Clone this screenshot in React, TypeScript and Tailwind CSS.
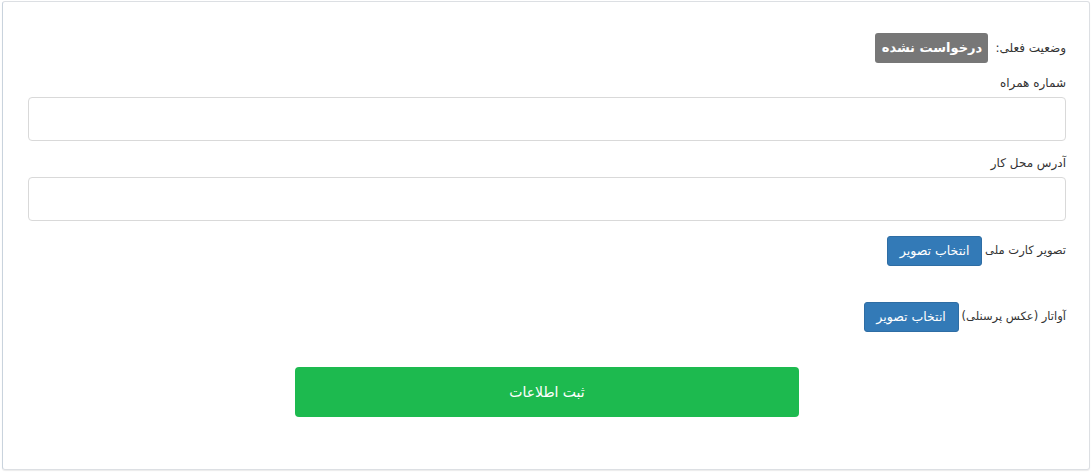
export default function App() {
  return (
    <div className="w-[1091px] h-[472px] bg-white pt-px pl-[2px]">
      <div
        dir="rtl"
        className="w-[1088px] h-[469px] border border-[#dcdfe3] border-l-[#c9d3dd] rounded-[3px] shadow-[0_1px_1px_rgba(0,0,0,0.08)] pl-[25px] pr-[23px] pt-[31px] text-[12px] text-[#333]"
        style={{ fontFamily: '"DejaVu Sans", "Noto Sans", sans-serif' }}
      >
        {/* Current status */}
        <div className="flex items-center gap-[7px] h-[30px]">
          <span>وضعیت فعلی:</span>
          <span className="h-[30px] w-[113px] flex items-center justify-center rounded-[3px] bg-[#777] text-white font-bold text-[13px]">
            درخواست نشده
          </span>
        </div>

        <div className="mt-[11px] h-[18px] leading-[18px]">شماره همراه</div>
        <input
          type="text"
          className="mt-[5px] block w-full h-[44px] border border-[#d9d9d9] rounded-[4px] outline-none"
        />

        <div className="mt-[13px] h-[18px] leading-[18px]">آدرس محل کار</div>
        <input
          type="text"
          className="mt-[5px] block w-full h-[44px] border border-[#d9d9d9] rounded-[4px] outline-none"
        />

        <div className="mt-[15px] flex items-center gap-[3px] h-[30px]">
          <span className="text-[11.5px]">تصویر کارت ملی</span>
          <button className="h-[30px] w-[95px] rounded-[3px] bg-[#337ab7] border border-[#2e6da4] text-white text-[12.5px]">
            انتخاب تصویر
          </button>
        </div>

        <div className="mt-[36px] flex items-center gap-[3px] h-[30px]">
          <span className="text-[11.5px]">آواتار (عکس پرسنلی)</span>
          <button className="h-[30px] w-[95px] rounded-[3px] bg-[#337ab7] border border-[#2e6da4] text-white text-[12.5px]">
            انتخاب تصویر
          </button>
        </div>

        <div className="mt-[35px] flex justify-center">
          <button className="h-[50px] w-[504px] rounded-[4px] bg-[#1dba4f] text-white text-[14px]">
            ثبت اطلاعات
          </button>
        </div>
      </div>
    </div>
  );
}
